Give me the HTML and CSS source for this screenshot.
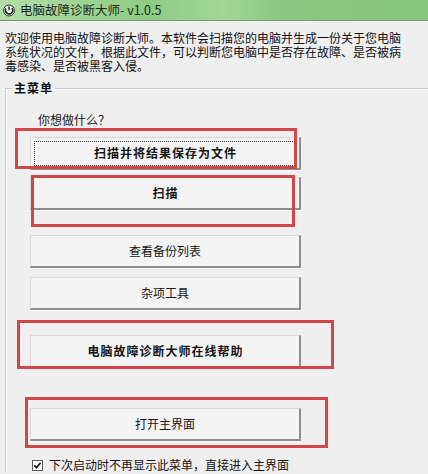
FILE: index.html
```html
<!DOCTYPE html>
<html lang="zh-CN">
<head>
<meta charset="utf-8">
<title>电脑故障诊断大师</title>
<link rel="stylesheet" href="styles.css">
</head>
<body>
<div class="window">
  <div class="titlebar">
    <svg class="appicon" width="12" height="13" viewBox="0 0 12 13">
      <circle cx="6" cy="6.5" r="5.5" fill="#f4f6f2" stroke="#2d3a2c" stroke-width="1"/>
      <path d="M3 4.5 A3.6 3.6 0 1 0 8.8 4" fill="none" stroke="#1f2a1f" stroke-width="1.6"/>
      <path d="M6 2.2 L6 6.2" stroke="#1f2a1f" stroke-width="1.4"/>
    </svg>
    <span class="title">电脑故障诊断大师- v1.0.5</span>
  </div>
  <p class="intro">欢迎使用电脑故障诊断大师。本软件会扫描您的电脑并生成一份关于您电脑<br>系统状况的文件，根据此文件，可以判断您电脑中是否存在故障、是否被病<br>毒感染、是否被黑客入侵。</p>
  <fieldset class="group">
    <legend class="group-title">主菜单</legend>
    <div class="menu">
      <div class="question">你想做什么？</div>
      <div class="btn bold focus first">扫描并将结果保存为文件</div>
      <div class="btn bold near">扫描</div>
      <div class="btn far">查看备份列表</div>
      <div class="btn near2">杂项工具</div>
      <div class="btn bold far">电脑故障诊断大师在线帮助</div>
      <div class="btn farther">打开主界面</div>
      <div class="check">
        <svg class="checkbox" width="11" height="11" viewBox="0 0 11 11">
          <rect x="0.5" y="0.5" width="10" height="10" fill="#fbfbfb" stroke="#5a5a5a"/>
          <path d="M2.3 5.3 L4.4 7.6 L8.6 2.8" fill="none" stroke="#1a1a1a" stroke-width="1.7"/>
        </svg>
        <span>下次启动时不再显示此菜单，直接进入主界面</span>
      </div>
    </div>
  </fieldset>
  <div class="mark m1"></div>
  <div class="mark m2"></div>
  <div class="mark m3"></div>
  <div class="mark m4"></div>
</div>
</body>
</html>
```

FILE: styles.css
```css
html, body {
  margin: 0;
  padding: 0;
}
body {
  width: 428px;
  height: 474px;
  overflow: hidden;
  background: #efeff0;
  font-family: "Noto Sans CJK SC", "Noto Sans", sans-serif;
  font-size: 12px;
  color: #141414;
}
.window {
  position: relative;
  width: 428px;
  height: 474px;
  overflow: hidden;
}
.titlebar {
  height: 20px;
  display: flex;
  align-items: center;
  gap: 5px;
  padding-left: 3px;
  background: linear-gradient(90deg, #b3dda8 0%, #9fd494 18%, #8ecb85 35%, #a3d699 52%, #8ac780 66%, #86c57c 100%);
  border-bottom: 1px solid #6f9a6b;
  box-shadow: 0 1px 0 #f7f9f7;
}
.appicon {
  flex: none;
}
.title {
  font-size: 12.5px;
  line-height: 20px;
  color: #1d2b1c;
}
.intro {
  margin: 10px 0 0 5px;
  line-height: 14px;
  white-space: nowrap;
  color: #111;
}
.group {
  margin: 8px 0 0 5px;
  padding: 0;
  width: 520px;
  border: 1px solid #c9c9c9;
  border-right: none;
  border-bottom: none;
  box-shadow: inset 1px 1px 0 #fbfbfb;
  min-width: 0;
}
.group-title {
  margin-left: 6px;
  padding: 0 2px;
  font-weight: bold;
  letter-spacing: 1px;
  line-height: 14px;
  color: #111;
}
.menu {
  padding-left: 24px;
  display: flex;
  flex-direction: column;
  align-items: flex-start;
}
.question {
  margin: 18px 0 0 8px;
  line-height: 14px;
  color: #1a1a1a;
}
.btn {
  box-sizing: border-box;
  width: 271px;
  height: 33px;
  display: flex;
  align-items: center;
  justify-content: center;
  background: #f4f4f4;
  border-top: 1px solid #d9d9d9;
  border-left: 1px solid #d9d9d9;
  border-right: 2px solid #8e8e8e;
  border-bottom: 2px solid #8e8e8e;
  box-shadow: 0 1px 0 #fdfdfd;
  color: #151515;
  line-height: 14px;
}
.btn.bold {
  font-weight: bold;
  letter-spacing: 1px;
  text-indent: 1px;
}
.btn.focus {
  outline: 1px dotted #3a3a3a;
  outline-offset: -5px;
}
.btn.first { margin-top: 10px; }
.btn.near { margin-top: 7px; }
.btn.near2 { margin-top: 9px; }
.btn.far { margin-top: 25px; }
.btn.farther { margin-top: 40px; }
.check {
  margin: 17px 0 0 2px;
  display: flex;
  align-items: center;
  gap: 6px;
  line-height: 14px;
  color: #141414;
}
.checkbox {
  flex: none;
}
.mark {
  position: absolute;
  box-sizing: border-box;
  border: 3px solid #cf4747;
}
.m1 { left: 15px; top: 128px; width: 282px; height: 41px; }
.m2 { left: 31px; top: 175px; width: 264px; height: 52px; }
.m3 { left: 17px; top: 320px; width: 317px; height: 49px; }
.m4 { left: 25px; top: 397px; width: 303px; height: 51px; }
```
